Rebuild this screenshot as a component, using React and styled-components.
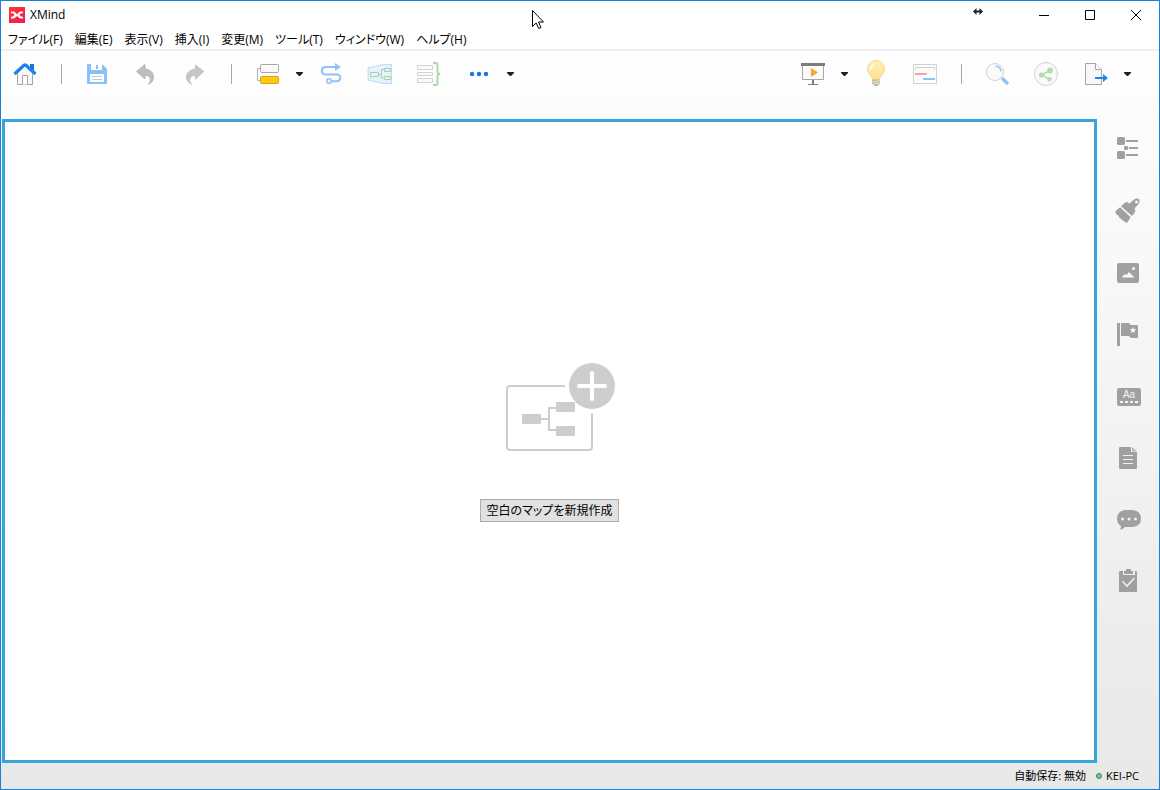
import React from 'react'
import styled, { createGlobalStyle } from 'styled-components'

const GlobalStyle = createGlobalStyle`
* {
  box-sizing: border-box;
}
body {
  margin: 0;
  font-family: "Open Sans", "Noto Sans CJK JP", sans-serif;
  font-size: 12px;
  line-height: 16px;
  color: #000;
}
button {
  font: inherit;
  color: inherit;
  border: none;
  background: none;
  padding: 0;
}
svg {
  display: block;
  overflow: visible;
}
`

const Window = styled.div`
  min-height: 100vh;
  display: flex;
  flex-direction: column;
  border: 1px solid #1883d7;
  background: linear-gradient(#ffffff, #fdfdfd 12%, #e8e8e8);
`
const Header = styled.header`
  background: #fff;
  border-bottom: 2px solid #f0f0f0;
`
const TitleBar = styled.div`
  height: 28px;
  display: flex;
  align-items: center;
  padding-left: 8px;
`
const Title = styled.h1`
  flex: 1;
  margin: 0;
  padding-left: 5px;
  font-size: 12px;
  font-weight: 400;
`
const ResizeMark = styled.div`
  align-self: flex-start;
  padding: 7px 38px 0 0;
`
const WindowButton = styled.button`
  width: 46px;
  height: 28px;
  display: flex;
  align-items: center;
  justify-content: center;
  &:hover {
    background: #e5e5e5;
  }
`
const MenuBar = styled.nav`
  height: 20px;
  display: flex;
  align-items: flex-end;
  padding: 0 0 1px 7px;
  gap: 12px;
`
const MenuItem = styled.button`
  font-feature-settings: "palt";
  white-space: nowrap;
  &:hover {
    background: #e5f3ff;
  }
`
const Toolbar = styled.div`
  display: flex;
  justify-content: space-between;
  padding: 0 24px 22px 0;
`
const ToolGroup = styled.div`
  display: flex;
  align-items: center;
`
const ToolButton = styled.button`
  width: 49px;
  height: 46px;
  display: flex;
  align-items: center;
  justify-content: center;
`
const DropButton = styled.button`
  width: 15px;
  height: 46px;
  display: flex;
  align-items: center;
  justify-content: center;
`
const Separator = styled.div`
  width: 1px;
  height: 20px;
  margin: 0 11px;
  background: #a8a8a8;
`
const Body = styled.div`
  flex: 1;
  display: flex;
  padding-left: 1px;
`
const Editor = styled.main`
  flex: 1;
  display: flex;
  flex-direction: column;
  align-items: center;
  justify-content: center;
  gap: 48px;
  padding-top: 2px;
  background: #fff;
  border: 3px solid #35a5dc;
`
const CreateButton = styled.button`
  height: 23px;
  padding: 2px 6px 0;
  border: 1px solid #adadad;
  background: #e1e1e1;
  font-feature-settings: "palt";
  &:hover {
    background: #e5f1fb;
  }
`
const SideBar = styled.aside`
  width: 62px;
  display: flex;
  flex-direction: column;
  align-items: center;
  gap: 38px;
  padding-top: 17px;
`
const SideButton = styled.button`
  width: 24px;
  height: 24px;
  color: #a0a0a0;
  &:hover {
    color: #808080;
  }
`
const StatusBar = styled.footer`
  height: 26px;
  display: flex;
  align-items: center;
  justify-content: flex-end;
  padding-right: 20px;
  font-size: 11px;
`
const StatusDot = styled.span`
  width: 6px;
  height: 6px;
  margin: 0 4px 0 10px;
  border-radius: 50%;
  border: 1px solid #2f8a57;
  background: #7fc79b;
`
const Pointer = styled.div`
  position: absolute;
  left: 532px;
  top: 10px;
  pointer-events: none;
`

const ToolIcon = ({ children }) => (
  <svg width="25" height="26" viewBox="0 0 25 26" fill="none">{children}</svg>
)
const SideIcon = ({ children }) => (
  <svg width="24" height="24" viewBox="0 0 24 24" fill="currentColor">{children}</svg>
)

const Drop = ({ label }) => (
  <DropButton aria-label={label}>
    <svg width="7" height="4" viewBox="0 0 7 4"><path d="M0 0h7v1L4 4H3L0 1z" fill="#202020" /></svg>
  </DropButton>
)

const HomeIcon = () => (
  <ToolIcon>
    <path d="M4.500 12L12 5l7.500 7v11.500h-15z" fill="#f8f8f8" stroke="#a5a5a5" />
    <path d="M9.500 23.500v-9h5v9" fill="#fff" stroke="#a5a5a5" />
    <path d="M17 3h4v8l-4-4z" fill="#1a74da" />
    <path d="M1.500 13L11 4.200q1-.8 2 0L22.500 13" stroke="#1a82f0" strokeWidth="3.200" />
  </ToolIcon>
)
const SaveIcon = () => (
  <ToolIcon>
    <path d="M2 4q0-1 1-1h14l5 5v14q0 1-1 1H3q-1 0-1-1z" fill="#88c1fb" />
    <path d="M6 3h11v6H6z" fill="#fff" />
    <path d="M11 4h2v4h-2z" fill="#88c1fb" />
    <path d="M5 13h14v8H5z" fill="#fff" />
    <path d="M7 15.500h10M7 18.500h10" stroke="#c8c8c8" />
  </ToolIcon>
)
const UndoIcon = () => (
  <ToolIcon>
    <path d="M2.500 10.500L11 3.500V8c5.500.5 8.500 4 8.500 8 0 3.500-2 6-5 7.300 1.500-2 2-3.300 1.800-5-.2-2.500-2-4-5.300-4V18z" fill="#bebebe" stroke="#a9a9a9" strokeWidth=".7" />
  </ToolIcon>
)
const RedoIcon = () => (
  <ToolIcon>
    <path d="M20.800 10.500L12.500 4v4C7 8.500 3.500 12 3.500 16c0 3.500 2 6 5 7.300-1.500-2-2-3.300-1.800-5 .2-2.500 2-4 5.800-4V18z" fill="#c6c6c6" stroke="#b4b4b4" strokeWidth=".7" />
  </ToolIcon>
)
const TopicIcon = () => (
  <ToolIcon>
    <path d="M5 7.500H2.500v12H5" stroke="#b0b0b0" />
    <rect x="5.500" y="3.500" width="18" height="8" rx="1" fill="#fafafa" stroke="#a8a8a8" />
    <rect x="5.500" y="15.500" width="18" height="7" rx="1" fill="#fdc912" stroke="#e0a010" />
  </ToolIcon>
)
const RelationIcon = () => (
  <ToolIcon>
    <path d="M17 6H6a3.800 3.800 0 0 0 0 7.500h12a3.300 3.300 0 0 1 0 6.700h-6" stroke="#92c1f5" strokeWidth="2" />
    <path d="M16 2l6 4-6 4z" fill="#92c1f5" />
    <circle cx="10" cy="20" r="2.200" stroke="#92c1f5" strokeWidth="1.600" />
  </ToolIcon>
)
const BoundaryIcon = () => (
  <ToolIcon>
    <path d="M0 7L15 3.500h8.500v19H15L0 19z" fill="#e6f1fd" stroke="#8ebdf2" strokeDasharray="1 1" />
    <path d="M2.500 11.500h8v4h-8zM16.500 7.500h6v3h-6zM16.500 15.500h6v3h-6zM10.500 13.500h3M16 8.500h-2.500v8.500H16" fill="none" stroke="#a9d3a5" />
  </ToolIcon>
)
const SummaryIcon = () => (
  <ToolIcon>
    <path d="M.5 4.500h15v4H.5zM.5 11.500h15v3H.5zM.5 17.500h15v4H.5z" fill="#fafafa" stroke="#d2d2d2" />
    <path d="M16 2h3q1.500 0 1.500 1.500V11q0 2 2.500 2-2.500 0-2.500 2v7.500q0 1.500-1.500 1.500h-3" stroke="#afd8ac" strokeWidth="2" />
  </ToolIcon>
)
const MoreIcon = () => (
  <ToolIcon>
    <g fill="#1a73e8">
      <circle cx="6" cy="13" r="2.200" />
      <circle cx="13" cy="13" r="2.200" />
      <circle cx="20" cy="13" r="2.200" />
    </g>
  </ToolIcon>
)
const PresentIcon = () => (
  <ToolIcon>
    <path d="M2.500 4.500h21v14h-21z" fill="#fafafa" stroke="#a5a5a5" />
    <path d="M1 2h24v3H1z" fill="#7c7c7c" />
    <path d="M11 7l7 4.500-7 4.500z" fill="#f9a825" />
    <path d="M12 19h2v4h-2zM8 23h10v1H8z" fill="#808080" />
  </ToolIcon>
)
const BulbIcon = () => (
  <ToolIcon>
    <defs>
      <linearGradient id="bulb" x1="0" y1="0" x2="0" y2="1">
        <stop offset="0" stopColor="#fff0b8" />
        <stop offset="1" stopColor="#fde28a" />
      </linearGradient>
    </defs>
    <path d="M8.500 18.500c0-2-1-2.800-2.500-4.500a8.500 8.500 0 1 1 12 0c-1.500 1.700-2.500 2.500-2.500 4.500z" fill="url(#bulb)" stroke="#f3d98a" />
    <path d="M6 9c.3-2.500 1.800-4 4-4.800" stroke="#fff" strokeWidth="1.500" />
    <path d="M8 18.500h8v4l-2.500 2.500h-3L8 22.500z" fill="#b9b9b9" />
    <path d="M8 21l8-1.500M8.500 23.200l7.500-1.500" stroke="#f5e0a5" />
  </ToolIcon>
)
const TimelineIcon = () => (
  <ToolIcon>
    <path d="M.5 3.500h23v19H.5z" fill="#fcfcfc" stroke="#d2d2d2" />
    <path d="M2.500 9V6.500h19V9" stroke="#cfcfcf" />
    <path d="M2 12h12v2H2z" fill="#f4a4a4" />
    <path d="M10 17h12v2H10z" fill="#92c1f5" />
  </ToolIcon>
)
const SearchIcon = () => (
  <ToolIcon>
    <path d="M17 17l6 6" stroke="#8fc0f6" strokeWidth="3.200" />
    <circle cx="10" cy="11" r="8.500" fill="#fafafa" stroke="#d2d2d2" />
    <path d="M10.500 5c3 .2 5.200 2.400 5.500 5.500" stroke="#92c1f5" strokeWidth="1.400" />
  </ToolIcon>
)
const ShareIcon = () => (
  <ToolIcon>
    <circle cx="12" cy="13" r="11.500" fill="#fafafa" stroke="#d2d2d2" />
    <path d="M16 9.500l-8.500 4.500 8 4" stroke="#b3deab" strokeWidth="1.500" />
    <g fill="#b3deab">
      <circle cx="16" cy="9.500" r="2.900" />
      <circle cx="7.500" cy="14" r="2.600" />
      <circle cx="15.500" cy="18.300" r="2.200" />
    </g>
  </ToolIcon>
)
const ExportIcon = () => (
  <ToolIcon>
    <path d="M2.500 2.500h10l6 6v15h-16z" fill="#f8f8f8" stroke="#a5a5a5" />
    <path d="M12.500 2.500v6h6" fill="#fff" stroke="#a5a5a5" />
    <path d="M12 16h8v-3l5 4-5 4v-3h-8z" fill="#1f84f2" />
  </ToolIcon>
)

const OutlineIcon = () => (
  <SideIcon>
    <rect x="1" y="1" width="8" height="8" rx="1.500" />
    <rect x="8" y="10" width="4" height="4" rx="1" />
    <rect x="1" y="15" width="8" height="8" rx="1.500" />
    <path d="M10 4h12v2H10zM13 11h9v2h-9zM10 18h12v2H10z" />
  </SideIcon>
)
const BrushIcon = () => (
  <SideIcon>
    <path d="M-1 13.700L4 9.300l10.700 10-4 6-2.200-2-.8.500-1.200-2-1 .2-1-2-1.200-.2-.8-2.300-1.500-.5z" />
    <path fillRule="evenodd" d="M5 8.300l4.500-4q1-.8 2 0L13 5.700l5.300-4.400q3-1.800 4.800 0 1.400 2-.1 4.200L19 10q-.6 1 0 2 .8 1.200 0 2.200L16 18zM20.500 2.500a1.500 1.500 0 1 0 .1 0z" />
  </SideIcon>
)
const ImageIcon = () => (
  <SideIcon>
    <rect x="1" y="3" width="22" height="20" rx="2" />
    <path d="M5.500 17.500L9 14l1.500 1L13 12l5.500 5.500z" fill="#f8f8f8" />
    <circle cx="17.500" cy="8.500" r="1.500" fill="#f8f8f8" />
  </SideIcon>
)
const MarkerIcon = () => (
  <SideIcon>
    <path d="M1 1h3v23H1zM5 1h8q1 2 2.500 2H21q1 0 1 1v11q0 1-1 1h-5q-2 0-3-2H5z" />
    <path d="M17 5l.9 2 2.200.2-1.600 1.500.5 2.200-2-1.200-2 1.200.5-2.200-1.600-1.500 2.200-.2z" fill="#f8f8f8" />
  </SideIcon>
)
const LabelIcon = () => (
  <SideIcon>
    <rect x="1" y="4" width="24" height="18" rx="2" />
    <text x="13" y="14" fontSize="10" textAnchor="middle" fontFamily="Liberation Sans, sans-serif" fill="#f5f5f5">Aa</text>
    <path d="M4 17h3v2H4zM9 17h3v2H9zM14 17h3v2h-3zM19 17h3v2h-3z" fill="#f5f5f5" />
  </SideIcon>
)
const NoteIcon = () => (
  <SideIcon>
    <path d="M4 1h11v5h6v16q0 1-1 1H4q-1 0-1-1V2q0-1 1-1z" />
    <path d="M16 1l5 4.500h-5z" opacity=".7" />
    <path d="M7 9.500h10M7 13.500h10M7 17.500h10" stroke="#f3f3f3" />
  </SideIcon>
)
const CommentIcon = () => (
  <SideIcon>
    <path d="M9 2h8q8 1 8 8.500T17 19H9q-2 2.500-5.500 2.700Q5.500 20 5 18 1 16 1 10.500 1 3 9 2z" />
    <g fill="#f0f0f0">
      <circle cx="6.500" cy="11" r="1.500" />
      <circle cx="13" cy="11" r="1.500" />
      <circle cx="19.500" cy="11" r="1.500" />
    </g>
  </SideIcon>
)
const TaskIcon = () => (
  <SideIcon>
    <path d="M4 1h3v3h12V1h1q1 0 1 1v19q0 1-1 1H4q-1 0-1-1V2q0-1 1-1z" />
    <path d="M7 1h1v3h9V1h2v4H7z" fill="#efefef" />
    <path d="M8 1h2V0q0-1 1-1h3q1 0 1 1v1h2v3H8z" />
    <path d="M6.500 11.500l4.500 4.500 7.500-8" fill="none" stroke="#efefef" strokeWidth="1.600" />
  </SideIcon>
)

const menus = ['ファイル(F)', '編集(E)', '表示(V)', '挿入(I)', '変更(M)', 'ツール(T)', 'ウィンドウ(W)', 'ヘルプ(H)']

const panels = [
  ['アウトライン', OutlineIcon],
  ['書式', BrushIcon],
  ['画像', ImageIcon],
  ['マーカー', MarkerIcon],
  ['ラベル', LabelIcon],
  ['ノート', NoteIcon],
  ['コメント', CommentIcon],
  ['タスク', TaskIcon],
]

const App = () => {
  return (
    <Window>
      <GlobalStyle />
      <Header>
        <TitleBar>
          <svg width="16" height="16" viewBox="0 0 16 16">
            <defs>
              <linearGradient id="logo" x1="0" y1="0" x2="1" y2="1">
                <stop offset="0" stopColor="#ff3a2e" />
                <stop offset="1" stopColor="#f5145a" />
              </linearGradient>
            </defs>
            <path d="M0 0h16v16H0z" fill="url(#logo)" />
            <path d="M2 4.500h2.500q1 0 2 1.300Q7.500 7 8 7t1.500-1.200q1-1.300 2-1.300H14v1.800h-1.500q-1.200.2-2 1.500 1 1.700 2.500 2H14v1.700h-2.500q-1 0-2-1.200T8 9.200t-1.500 1.100q-1 1.200-2 1.200H2V9.800h1q1.500-.3 2.500-2-.8-1.300-2-1.500H2z" fill="#fff" />
          </svg>
          <Title>XMind</Title>
          <ResizeMark>
            <svg width="10" height="7" viewBox="0 0 10 7"><path d="M0 3.500L3.500 0v2.500h3V0L10 3.500 6.500 7V4.500h-3V7z" fill="#222" /></svg>
          </ResizeMark>
          <WindowButton aria-label="最小化">
            <svg width="10" height="10"><path d="M0 5.500h10" stroke="#000" /></svg>
          </WindowButton>
          <WindowButton aria-label="最大化">
            <svg width="10" height="10"><path d="M.5 .5h9v9h-9z" fill="none" stroke="#000" /></svg>
          </WindowButton>
          <WindowButton aria-label="閉じる">
            <svg width="10" height="10"><path d="M0 0l10 10M10 0L0 10" stroke="#000" /></svg>
          </WindowButton>
        </TitleBar>
        <MenuBar>
          {menus.map(name => <MenuItem key={name}>{name}</MenuItem>)}
        </MenuBar>
      </Header>
      <Toolbar>
        <ToolGroup>
          <ToolButton aria-label="ホーム"><HomeIcon /></ToolButton>
          <Separator />
          <ToolButton aria-label="保存"><SaveIcon /></ToolButton>
          <ToolButton aria-label="元に戻す"><UndoIcon /></ToolButton>
          <ToolButton aria-label="やり直し"><RedoIcon /></ToolButton>
          <Separator />
          <ToolButton aria-label="トピック"><TopicIcon /></ToolButton>
          <Drop label="トピックの種類" />
          <ToolButton aria-label="関連"><RelationIcon /></ToolButton>
          <ToolButton aria-label="境界"><BoundaryIcon /></ToolButton>
          <ToolButton aria-label="要約"><SummaryIcon /></ToolButton>
          <ToolButton aria-label="その他"><MoreIcon /></ToolButton>
          <Drop label="その他の項目" />
        </ToolGroup>
        <ToolGroup>
          <ToolButton aria-label="プレゼンテーション"><PresentIcon /></ToolButton>
          <Drop label="プレゼンテーションの種類" />
          <ToolButton aria-label="ブレインストーミング"><BulbIcon /></ToolButton>
          <ToolButton aria-label="ガントチャート"><TimelineIcon /></ToolButton>
          <Separator />
          <ToolButton aria-label="検索"><SearchIcon /></ToolButton>
          <ToolButton aria-label="共有"><ShareIcon /></ToolButton>
          <ToolButton aria-label="エクスポート"><ExportIcon /></ToolButton>
          <Drop label="エクスポートの種類" />
        </ToolGroup>
      </Toolbar>
      <Body>
        <Editor>
          <svg width="131" height="88" viewBox="0 0 131 88" fill="none">
            <path d="M81 23H26q-3 0-3 3v58q0 3 3 3h79q3 0 3-3V50" stroke="#cdcdcd" strokeWidth="2" />
            <path d="M57 56h8M72 45h-7v22h7" stroke="#cdcdcd" strokeWidth="2" />
            <g fill="#cdcdcd">
              <rect x="38" y="51" width="19" height="10" rx="1" />
              <rect x="72" y="39" width="19" height="10" rx="1" />
              <rect x="72" y="63" width="19" height="10" rx="1" />
              <circle cx="108" cy="23" r="23" />
            </g>
            <path d="M108 10v26M95 23h26" stroke="#fff" strokeWidth="4" strokeLinecap="round" />
          </svg>
          <CreateButton>空白のマップを新規作成</CreateButton>
        </Editor>
        <SideBar>
          {panels.map(([name, Icon]) => (
            <SideButton key={name} aria-label={name}><Icon /></SideButton>
          ))}
        </SideBar>
      </Body>
      <StatusBar>
        <span>自動保存: 無効</span>
        <StatusDot />
        <span>KEI-PC</span>
      </StatusBar>
      <Pointer>
        <svg width="12" height="19" viewBox="0 0 12 19">
          <path d="M.5 .5v16l3.700-3.500 2.500 5.500 2.300-1-2.500-5.500h5z" fill="#fff" stroke="#000" />
        </svg>
      </Pointer>
    </Window>
  )
}

export default App
